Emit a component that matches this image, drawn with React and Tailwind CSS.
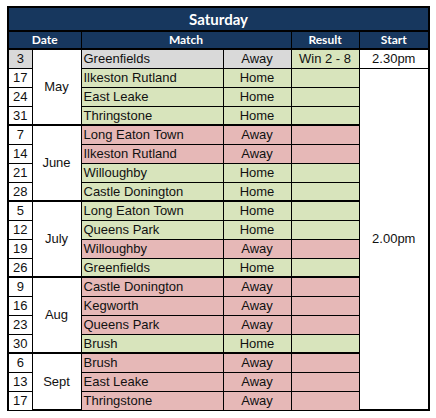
import React from "react";

const G = "bg-[#d8e4bc]";
const R = "bg-[#e6b8b7]";
const Y = "bg-[#d9d9d9]";

const groups = [
  {
    month: "May",
    rows: [
      ["3", "Greenfields", "Away", "gray"],
      ["17", "Ilkeston Rutland", "Home", "g"],
      ["24", "East Leake", "Home", "g"],
      ["31", "Thringstone", "Home", "g"],
    ],
  },
  {
    month: "June",
    rows: [
      ["7", "Long Eaton Town", "Away", "r"],
      ["14", "Ilkeston Rutland", "Away", "r"],
      ["21", "Willoughby", "Home", "g"],
      ["28", "Castle Donington", "Home", "g"],
    ],
  },
  {
    month: "July",
    rows: [
      ["5", "Long Eaton Town", "Home", "g"],
      ["12", "Queens Park", "Home", "g"],
      ["19", "Willoughby", "Away", "r"],
      ["26", "Greenfields", "Home", "g"],
    ],
  },
  {
    month: "Aug",
    rows: [
      ["9", "Castle Donington", "Away", "r"],
      ["16", "Kegworth", "Away", "r"],
      ["23", "Queens Park", "Away", "r"],
      ["30", "Brush", "Home", "g"],
    ],
  },
  {
    month: "Sept",
    rows: [
      ["6", "Brush", "Away", "r"],
      ["13", "East Leake", "Away", "r"],
      ["17", "Thringstone", "Away", "r"],
    ],
  },
];

const HF = { fontFamily: 'Lato, "Open Sans", sans-serif' };

export default function App() {
  const body = [];
  groups.forEach((g, gi) => {
    g.rows.forEach((r, ri) => {
      const first = ri === 0;
      const bg = r[3] === "g" ? G : r[3] === "r" ? R : Y;
      const resBg = r[3] === "r" ? R : G;
      const tb = first ? "border-t-2" : "border-t";
      const isTop = gi === 0 && ri === 0;
      body.push(
        <tr key={gi + "-" + ri} className="h-[19px]">
          <td className={`${tb} border-l-2 border-r border-b border-black text-center p-0 leading-none ${isTop ? Y : "bg-white"}`}>
            {r[0]}
          </td>
          {first && (
            <td
              rowSpan={g.rows.length}
              className="border-t-2 border-r border-b-2 border-black text-center align-middle p-0 bg-white"
            >
              {g.month}
            </td>
          )}
          <td className={`${tb} border-r border-b border-black pl-[2px] p-0 leading-none whitespace-nowrap ${bg}`}>{r[1]}</td>
          <td className={`${tb} border-r border-b border-black text-center p-0 leading-none ${bg}`}>{r[2]}</td>
          <td className={`${tb} border-r border-b border-black text-center p-0 leading-none ${isTop ? G : resBg}`}>
            {isTop ? "Win 2 - 8" : ""}
          </td>
          {isTop && (
            <td className="border-t border-r-2 border-b border-black text-center p-0 leading-none bg-white">2.30pm</td>
          )}
          {gi === 0 && ri === 1 && (
            <td rowSpan={18} className="border-r-2 border-b-2 border-black text-center align-middle p-0 bg-white">
              2.00pm
            </td>
          )}
        </tr>
      );
    });
  });

  return (
    <div className="w-[436px] h-[418px] bg-white pt-[6px] pl-[7px]">
      <table
        className="table-fixed border-collapse w-[421px] text-[13px] text-[#111]"
        style={{ fontFamily: '"Liberation Sans", Arial, sans-serif' }}
      >
        <colgroup>
          <col className="w-[24px]" />
          <col className="w-[49px]" />
          <col className="w-[142px]" />
          <col className="w-[68px]" />
          <col className="w-[68px]" />
          <col className="w-[70px]" />
        </colgroup>
        <thead>
          <tr className="h-[24px]">
            <th
              colSpan={6}
              className="border-2 border-black bg-[#17375e] text-white text-[15px] font-bold text-center p-0 leading-none"
              style={HF}
            >
              Saturday
            </th>
          </tr>
          <tr className="h-[18px]">
            <th
              colSpan={2}
              className="border-l-2 border-r border-t border-b-2 border-black bg-[#17375e] text-white text-[12px] font-bold text-center p-0 leading-none"
              style={HF}
            >
              Date
            </th>
            <th
              colSpan={2}
              className="border-r border-t border-b-2 border-black bg-[#17375e] text-white text-[12px] font-bold text-center p-0 leading-none"
              style={HF}
            >
              Match
            </th>
            <th
              className="border-r border-t border-b-2 border-black bg-[#17375e] text-white text-[12px] font-bold text-center p-0 leading-none"
              style={HF}
            >
              Result
            </th>
            <th
              className="border-r-2 border-t border-b-2 border-black bg-[#17375e] text-white text-[12px] font-bold text-center p-0 leading-none"
              style={HF}
            >
              Start
            </th>
          </tr>
        </thead>
        <tbody>{body}</tbody>
      </table>
    </div>
  );
}
